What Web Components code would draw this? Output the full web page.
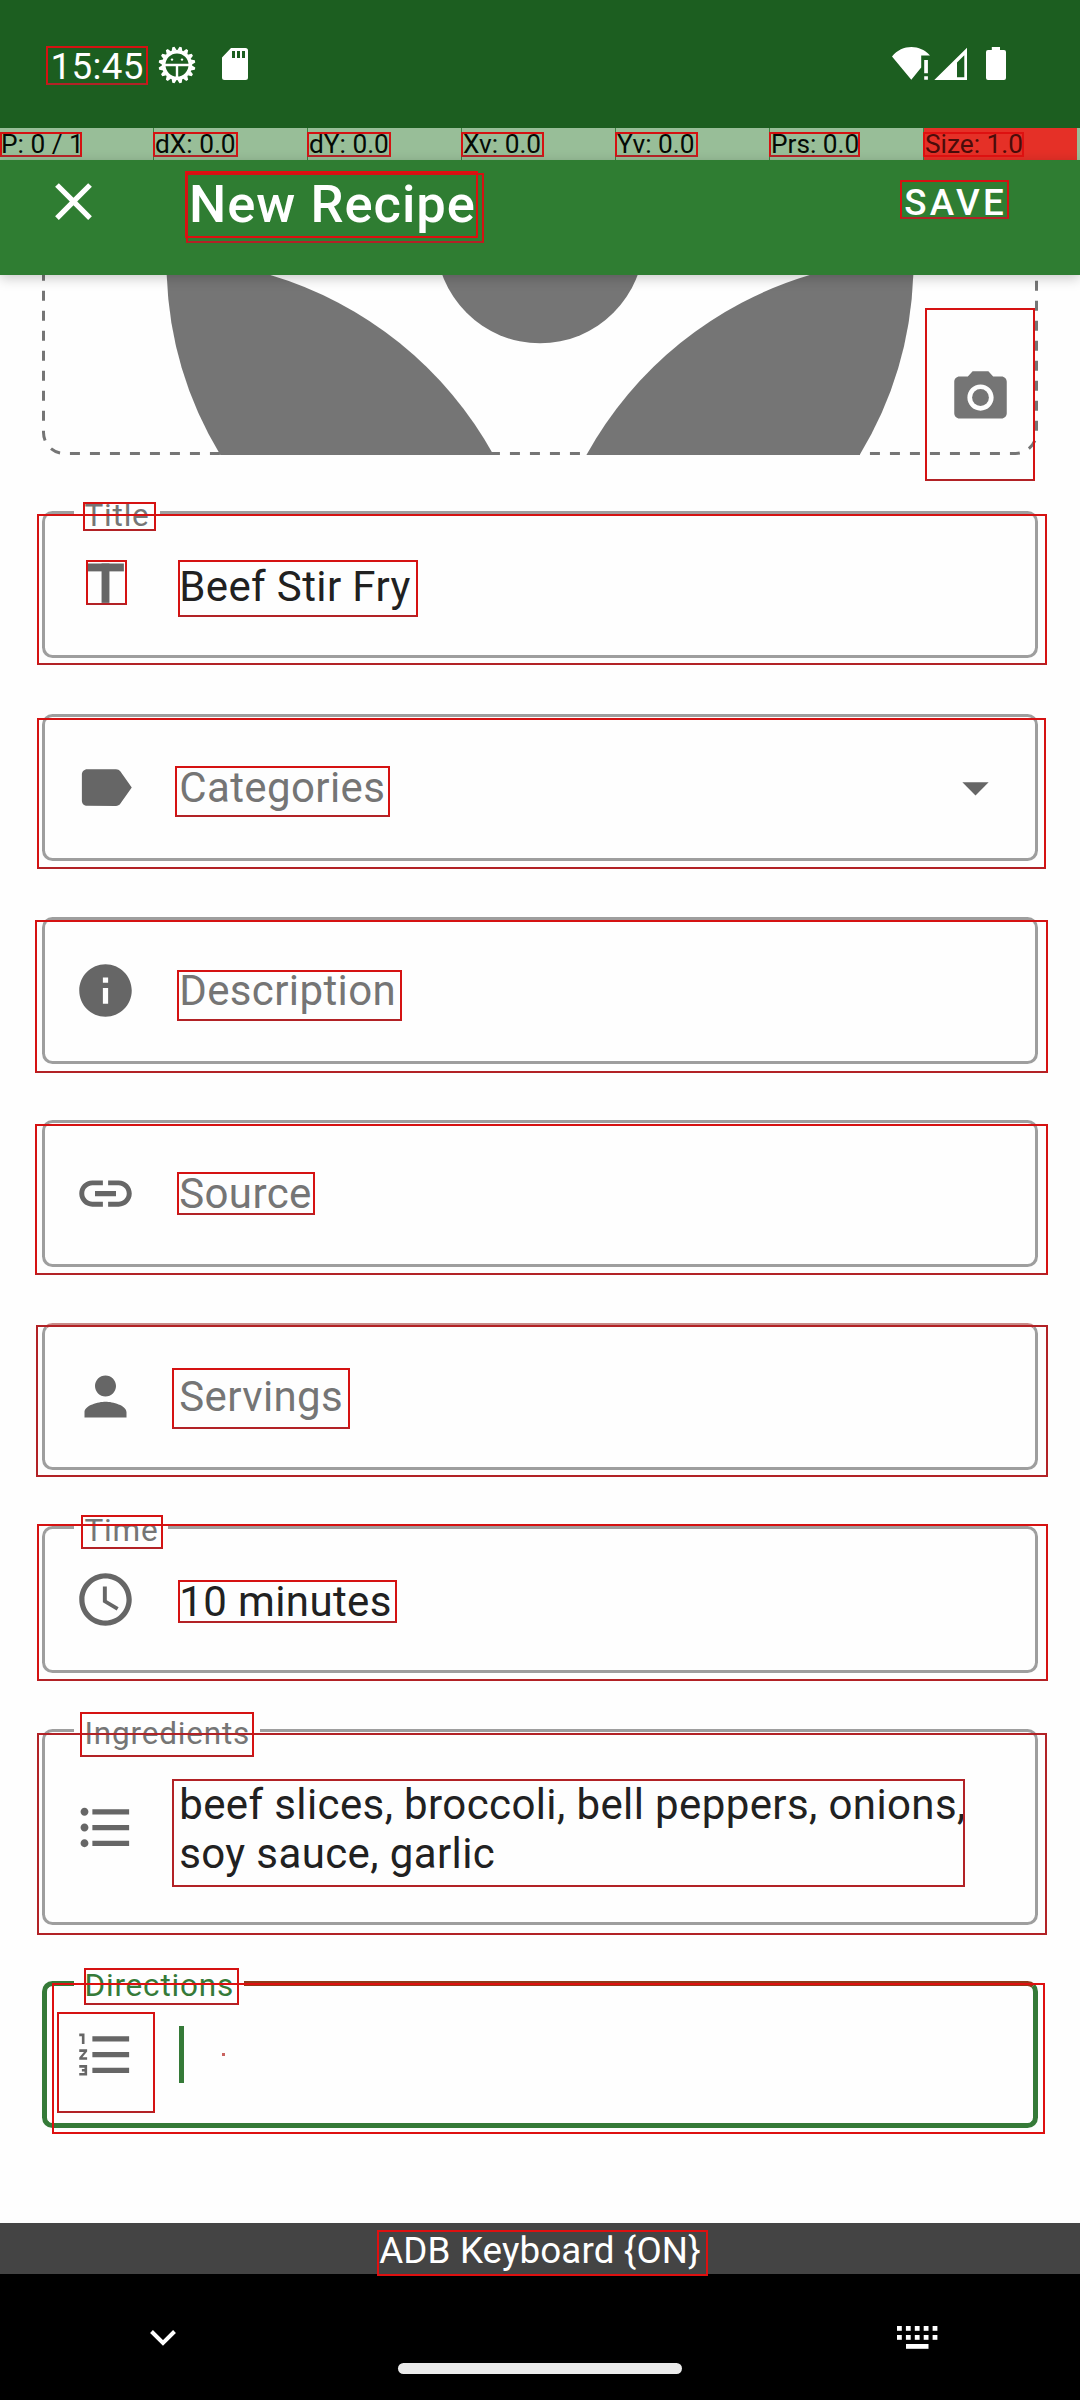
<!DOCTYPE html>
<html lang="en">
<head>
<meta charset="utf-8">
<title>New Recipe</title>
<style>
  body { margin: 0; width: 1080px; height: 2400px; overflow: hidden; background: #fefefe; font-family: Roboto, sans-serif; }
</style>
</head>
<body>
<recipe-screen></recipe-screen>
<script>
const ICONS = {
  close: '<path d="M19 6.41L17.59 5 12 10.59 6.41 5 5 6.41 10.59 12 5 17.59 6.41 19 12 13.41 17.59 19 19 17.59 13.41 12z"/>',
  camera: '<circle cx="12" cy="12" r="3.2"/><path d="M9 2L7.17 4H4c-1.1 0-2 .9-2 2v12c0 1.1.9 2 2 2h16c1.1 0 2-.9 2-2V6c0-1.1-.9-2-2-2h-3.17L15 2H9zm3 15c-2.76 0-5-2.24-5-5s2.24-5 5-5 5 2.24 5 5-2.24 5-5 5z"/>',
  title: '<rect x="5" y="4" width="14" height="3"/><rect x="10.5" y="4" width="3" height="15"/>',
  label: '<path d="M17.63 5.84C17.27 5.33 16.67 5 16 5L5 5.01C3.9 5.01 3 5.9 3 7v10c0 1.1.9 1.99 2 1.99L16 19c.67 0 1.27-.33 1.63-.84L22 12l-4.37-6.16z"/>',
  info: '<path d="M12 2C6.48 2 2 6.48 2 12s4.48 10 10 10 10-4.48 10-10S17.52 2 12 2zm1 15h-2v-6h2v6zm0-8h-2V7h2v2z"/>',
  link: '<path d="M3.9 12c0-1.71 1.39-3.1 3.1-3.1h4V7H7c-2.76 0-5 2.24-5 5s2.24 5 5 5h4v-1.9H7c-1.71 0-3.1-1.39-3.1-3.1zM8 13h8v-2H8v2zm9-6h-4v1.9h4c1.71 0 3.1 1.39 3.1 3.1s-1.39 3.1-3.1 3.1h-4V17h4c2.76 0 5-2.24 5-5s-2.24-5-5-5z"/>',
  person: '<path d="M12 12c2.21 0 4-1.79 4-4s-1.79-4-4-4-4 1.79-4 4 1.79 4 4 4zm0 2c-2.67 0-8 1.34-8 4v2h16v-2c0-2.66-5.33-4-8-4z"/>',
  clock: '<path d="M11.99 2C6.47 2 2 6.48 2 12s4.47 10 9.99 10C17.52 22 22 17.52 22 12S17.52 2 11.99 2zM12 20c-4.42 0-8-3.58-8-8s3.58-8 8-8 8 3.58 8 8-3.58 8-8 8zm.5-13H11v6l5.25 3.15.75-1.23-4.5-2.67z"/>',
  bullets: '<path d="M4 10.5c-.83 0-1.5.67-1.5 1.5s.67 1.5 1.5 1.5 1.5-.67 1.5-1.5-.67-1.5-1.5-1.5zm0-6c-.83 0-1.5.67-1.5 1.5S3.17 7.5 4 7.5 5.5 6.83 5.5 6 4.83 4.5 4 4.5zm0 12c-.83 0-1.5.68-1.5 1.5s.68 1.5 1.5 1.5 1.5-.68 1.5-1.5-.67-1.5-1.5-1.5zM7 19h14v-2H7v2zm0-6h14v-2H7v2zm0-8v2h14V5H7z"/>',
  numbers: '<path d="M2 17h2v.5H3v1h1v.5H2v1h3v-4H2v1zm1-9h1V4H2v1h1v3zm-1 3h1.8L2 13.1v.9h3v-1H3.2L5 10.9V10H2v1zm5-6v2h14V5H7zm0 14h14v-2H7v2zm0-6h14v-2H7v2z"/>',
  dropdown: '<path d="M7 10l5 5 5-5z"/>'
};

function define(name, html, setup) {
  const template = document.createElement('template');
  template.innerHTML = html.trim();
  customElements.define(name, class extends HTMLElement {
    connectedCallback() {
      if (this.shadowRoot) return;
      this.attachShadow({ mode: 'open' }).appendChild(template.content.cloneNode(true));
      if (setup) setup(this, this.shadowRoot);
    }
  });
}

define('md-icon', `
  <style>:host{display:block;width:63px;height:63px;flex:none} svg{display:block;width:63px;height:63px;fill:currentColor}</style>
  <svg viewBox="0 0 24 24"></svg>`,
  (el, root) => { root.querySelector('svg').innerHTML = ICONS[el.getAttribute('name')]; });

define('status-bar', `
  <style>
    :host{display:flex;height:128px;background:#1c5e20;color:#fff;box-sizing:border-box;padding:45px 73px 0 50.5px}
    .clock{font-size:36.75px;line-height:43px;width:107.5px;letter-spacing:.35px}
    svg{display:block;fill:#fff;flex:none}
    .gear{margin:.5px 26px 0 0}
    .spacer{flex:1}
    .sys{margin-top:1px}
  </style>
  <span class="clock">15:45</span>
  <svg class="gear" width="38" height="38" viewBox="-19 -19 38 38">
    <g class="teeth"></g>
    <circle r="13.3" fill="none" stroke="#fff" stroke-width="3.6"/>
    <path d="M-13 -1.200h26v2.400h-26zM-1.200 0h2.400v14h-2.400z"/>
    <circle cx="-5" cy="-5.4" r="1.2"/><circle cx="5" cy="-5.4" r="1.2"/>
  </svg>
  <svg width="26" height="38" viewBox="0 0 26 38">
    <path fill-rule="evenodd" d="M9 3H23.500a2.500 2.500 0 0 1 2.500 2.500V32.500a2.500 2.500 0 0 1 -2.500 2.500H2.500a2.500 2.500 0 0 1 -2.500 -2.500V12.500zM10 6v7h3v-7zM15 6v7h3v-7zM20 6v7h3v-7z"/>
  </svg>
  <span class="spacer"></span>
  <svg class="sys" width="115" height="36" viewBox="892 46 115 36">
    <path d="M892 56.500C902 44 920 44 930 55.500H921.200V67.500L911.300 79.700z"/>
    <path d="M924.200 60h3.700v13.300h-3.700zM924.200 76.300h3.700v3.400h-3.700z"/>
    <path fill-rule="evenodd" d="M934.300 80L967 47.700V80zM957 62.500V77.300H964.300V55.200z"/>
    <path d="M991.800 47h8.200v3h4a2 2 0 0 1 2 2V78a2 2 0 0 1 -2 2H988a2 2 0 0 1 -2 -2V52a2 2 0 0 1 2 -2h3.800z"/>
  </svg>`,
  (el, root) => {
    let teeth = '';
    for (let i = 0; i < 16; i++) teeth += `<path d="M-2.600 -14.500L-1.100 -18.400H1.100L2.600 -14.500z" transform="rotate(${i * 22.5 + 11.25})"/>`;
    root.querySelector('.teeth').innerHTML = teeth;
  });

define('pointer-cell', `
  <style>:host{display:block;box-sizing:border-box;width:153px;height:32px;margin-right:1px;flex:none;padding-left:1px;background:#98be98;color:#050a05;font-size:26.25px;line-height:32px;white-space:nowrap}
  :host([alert]){background:#e53027;color:#4a0c0a}</style><slot></slot>`);

define('pointer-strip', `
  <style>:host{display:flex;height:32px;background:#3d8440;overflow:hidden} i{flex:1;background:#98be98;margin-left:-1px}</style>
  <pointer-cell>P: 0 / 1</pointer-cell><pointer-cell>dX: 0.0</pointer-cell><pointer-cell>dY: 0.0</pointer-cell><pointer-cell>Xv: 0.0</pointer-cell><pointer-cell>Yv: 0.0</pointer-cell><pointer-cell>Prs: 0.0</pointer-cell><pointer-cell alert>Size: 1.0</pointer-cell><i></i>`);

define('app-bar', `
  <style>
    :host{display:flex;position:relative;z-index:1;height:115px;box-sizing:border-box;padding:0 73px 0 42px;background:#2f7d32;color:#fff;box-shadow:0 3px 12px rgba(0,0,0,.22)}
    md-icon{margin-top:10px}
    h1{margin:13px 0 0 84px;font-size:52.5px;line-height:62px;font-weight:500;letter-spacing:1px;flex:1}
    button{all:unset;margin-top:21px;height:43px;font-size:36.75px;line-height:43px;font-weight:500;letter-spacing:3.28px}
  </style>
  <md-icon name="close"></md-icon><h1>New Recipe</h1><button>SAVE</button>`);

define('photo-picker', `
  <style>
    :host{display:grid;height:236px;overflow:hidden;color:#757575}
    svg.art{grid-area:1/1;display:block}
    md-icon{grid-area:1/1;margin:90.500px 0 0 948.500px}
  </style>
  <svg class="art" width="1080" height="236" viewBox="0 275 1080 236">
    <g fill="#757575">
      <path d="M166.700 275A373.500 373.500 0 0 0 220.400 455H493.600A378.300 378.300 0 0 0 270.300 275z"/>
      <path transform="matrix(-1 0 0 1 1080 0)" d="M166.700 275A373.500 373.500 0 0 0 220.400 455H493.600A378.300 378.300 0 0 0 270.300 275z"/>
      <circle cx="540" cy="239.400" r="103.900"/>
    </g>
    <path d="M43.500 270.700V432.500A21 21 0 0 0 64.500 453.500H1015.500A21 21 0 0 0 1036.500 432.500V260" fill="none" stroke="#757575" stroke-width="3" stroke-dasharray="10 10"/>
  </svg>
  <md-icon name="camera"></md-icon>`);

define('outlined-field', `
  <style>
    :host{display:grid;height:var(--h,147px);--line:#9e9e9e;--w:3px}
    :host([focused]){--line:#357a38;--w:5px}
    .outline{grid-area:1/1;display:flex;min-width:0}
    .outline>*{box-sizing:border-box;border:0 solid var(--line)}
    .start{width:32px;border-width:var(--w) 0 var(--w) var(--w);border-radius:10.5px 0 0 10.5px}
    .notch{padding:0 10px 0 10.5px;border-bottom-width:var(--w);color:#757575}
    .notch span{display:block;margin-top:-14px;height:37px;font-size:31.5px;line-height:37px;letter-spacing:.8px;white-space:nowrap}
    :host([focused]) .notch{color:#357a38}
    :host(:not([label])) .notch{padding:0;border-top-width:var(--w)}
    .end{flex:1;border-width:var(--w) var(--w) var(--w) 0;border-radius:0 10.5px 10.5px 0}
    :host([warm]) .end,:host([warm]) .start,:host([warm]) .notch{border-top-color:#c98a88}
    :host([focused]) .end{border-top-color:#913918}
    .row{grid-area:1/1;display:flex;align-items:center;padding:0 31px 0 31.5px;color:#666;min-width:0}
    .text{flex:1;margin-left:42.700px;font-size:42px;line-height:49px;letter-spacing:.39px;color:#757575;white-space:nowrap}
    :host([filled]) .text{color:#212121;align-self:flex-start;margin-top:51px}
    .caret{display:none;width:5px;height:57px;margin-left:42.500px;background:#357a38}
    .dot{display:none;width:3px;height:3px;margin-left:38px;background:#c9625f}
    :host([focused]) .caret,:host([focused]) .dot{display:block}
    :host([focused]) .text{display:none}
  </style>
  <div class="outline"><div class="start"></div><div class="notch"></div><div class="end"></div></div>
  <div class="row"><md-icon></md-icon><div class="caret"></div><div class="dot"></div><div class="text"><slot></slot></div></div>`,
  (el, root) => {
    const icon = document.createElement('md-icon');
    icon.setAttribute('name', el.getAttribute('icon'));
    root.querySelector('md-icon').replaceWith(icon);
    if (el.hasAttribute('label')) {
      const s = document.createElement('span');
      s.textContent = el.getAttribute('label');
      root.querySelector('.notch').append(s);
    }
    if (el.hasAttribute('menu')) {
      const arrow = document.createElement('md-icon');
      arrow.setAttribute('name', 'dropdown');
      root.querySelector('.row').append(arrow);
    }
  });

define('recipe-form', `
  <style>:host{display:flex;flex-direction:column;gap:56px;padding:0 42px} .tall{--h:196px}</style>
  <outlined-field filled label="Title" icon="title">Beef Stir Fry</outlined-field>
  <outlined-field icon="label" menu>Categories</outlined-field>
  <outlined-field icon="info">Description</outlined-field>
  <outlined-field icon="link">Source</outlined-field>
  <outlined-field icon="person" warm>Servings</outlined-field>
  <outlined-field filled label="Time" icon="clock">10 minutes</outlined-field>
  <outlined-field class="tall" filled label="Ingredients" icon="bullets">beef slices, broccoli, bell peppers, onions,<br>soy sauce, garlic</outlined-field>
  <outlined-field focused label="Directions" icon="numbers"></outlined-field>`);

define('keyboard-bar', `
  <style>:host{display:block;height:51px;background:#444;color:#fff;text-align:center;font-size:36.75px;line-height:43px;letter-spacing:.13px;box-sizing:border-box;padding-top:6px}</style>
  ADB Keyboard {ON}`);

define('nav-bar', `
  <style>
    :host{display:flex;height:126px;background:#000;justify-content:space-between;box-sizing:border-box;padding:0 142px 0 150px}
    svg{display:block;margin-top:50px}
    .pill{width:284px;height:11px;border-radius:5.5px;background:#ebebeb;margin-top:89px;margin-left:7px}
  </style>
  <svg width="26" height="26" viewBox="0 0 26 26"><path d="M1.500 7.500L13 19L24.500 7.500" fill="none" stroke="#fff" stroke-width="4"/></svg>
  <div class="pill"></div>
  <svg width="41" height="26" viewBox="0 0 41 26" fill="#fff"><g class="keys"></g><rect x="9" y="20" width="22.500" height="4.800"/></svg>`,
  (el, root) => {
    let keys = '';
    for (const y of [2, 11]) for (let i = 0; i < 5; i++) keys += `<rect x="${i * 8.9}" y="${y}" width="4.800" height="4.800"/>`;
    root.querySelector('.keys').innerHTML = keys;
  });

/* Outline of one detected region; "rect" holds left, top, right and bottom. */
define('bounds-box', `
  <style>:host{position:absolute;box-sizing:border-box;border:2px solid #d51212;border-bottom-color:#b22226}
  :host([dim]){border-color:#b22226}
  :host([bright]){border-color:#de1010}</style>`,
  (el) => {
    const [l, t, r, b] = el.getAttribute('rect').split(' ').map(Number);
    Object.assign(el.style, { left: l + 'px', top: t + 'px', width: r - l + 'px', height: b - t + 'px' });
  });

const BOUNDS = [
  '46 46 148 85', '0 132 82 157', '153 132 238 157', '307 132 391 157', '461 132 544 157', '615 132 698 157',
  '769 132 860 157', '923 132 1024 157 bright', '185 171 478 238 bright', '186 173 484 243', '900 180 1009 219',
  '925 308 1035 481', '83 502 156 531', '37 514 1047 665', '86 560 127 605', '178 560 418 617',
  '37 718 1046 869', '175 766 390 817', '35 920 1048 1073', '177 970 402 1021',
  '35 1124 1048 1275', '177 1172 315 1215', '36 1325 1048 1477 dim', '172 1368 350 1429',
  '37 1524 1048 1681', '81 1515 163 1549', '178 1580 397 1623', '37 1733 1047 1935 dim', '80 1712 254 1757',
  '172 1779 965 1887 dim', '52 1983 1045 2134 bright', '84 1968 239 2005', '57 2012 155 2113', '377 2230 708 2276 bright'
];

define('bounds-layer', `<style>:host{position:absolute;left:0;top:0;width:1080px;height:2400px;z-index:2;pointer-events:none}</style>`,
  (el, root) => {
    for (const entry of BOUNDS) {
      const parts = entry.split(' ');
      const box = document.createElement('bounds-box');
      box.setAttribute('rect', parts.slice(0, 4).join(' '));
      if (parts[4]) box.setAttribute(parts[4], '');
      root.append(box);
    }
  });

define('recipe-screen', `
  <style>:host{display:flex;flex-direction:column;position:relative;width:1080px;height:2400px} main{flex:1;background:#fefefe}</style>
  <status-bar></status-bar>
  <pointer-strip></pointer-strip>
  <app-bar></app-bar>
  <main><photo-picker></photo-picker><recipe-form></recipe-form></main>
  <keyboard-bar></keyboard-bar>
  <nav-bar></nav-bar>
  <bounds-layer></bounds-layer>`);
</script>
</body>
</html>
